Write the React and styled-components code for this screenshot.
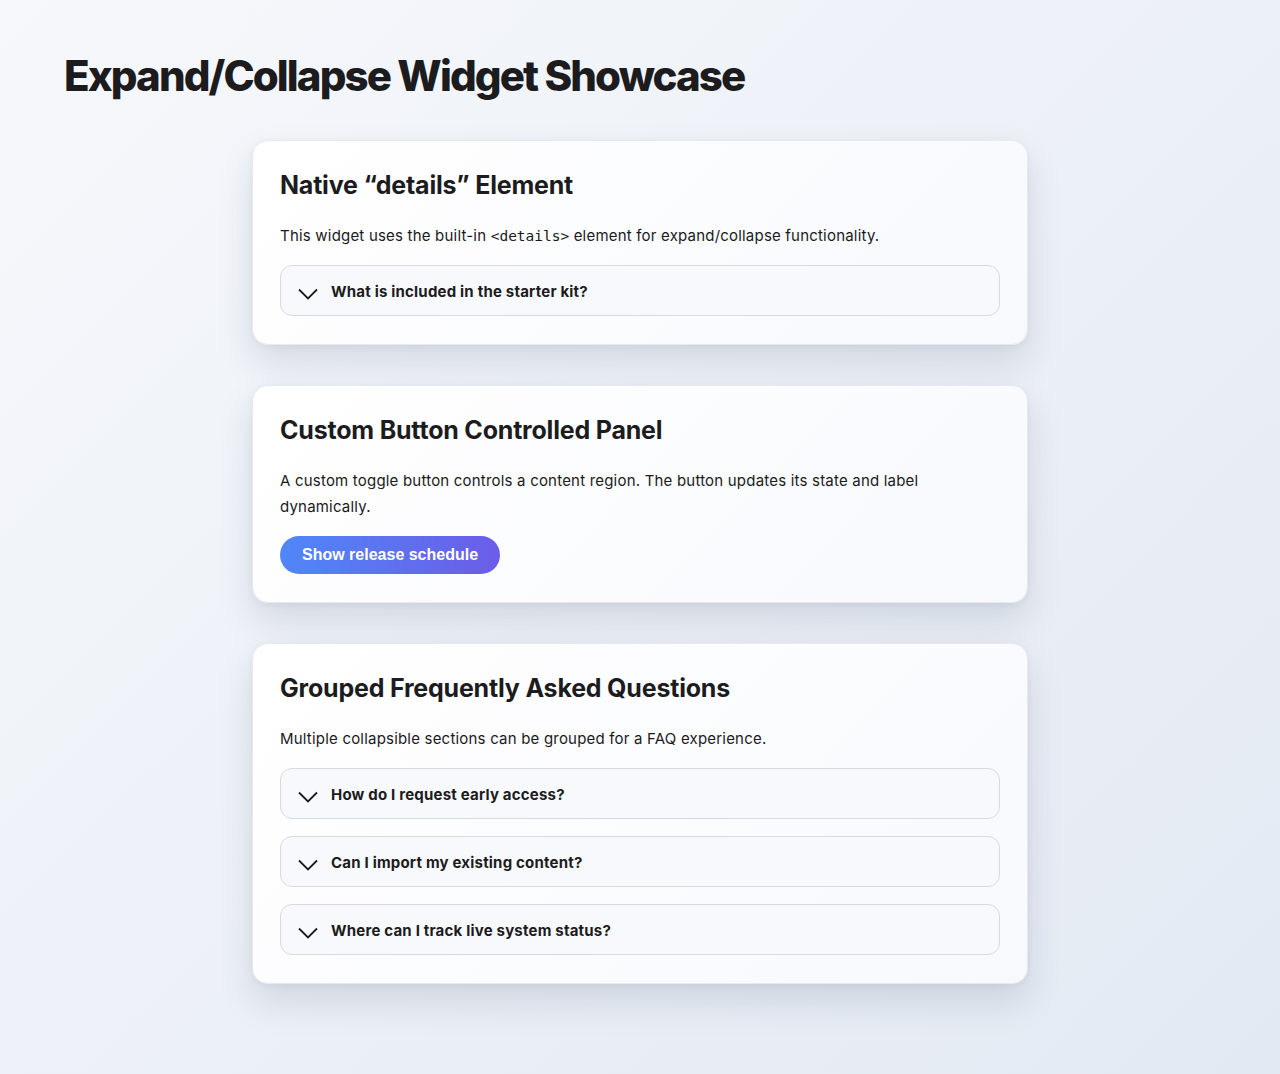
import React, { useState } from "react";
import styled, { createGlobalStyle } from "styled-components";

const Global = createGlobalStyle`
  * { box-sizing: border-box; }
  html, body { margin: 0; padding: 0; }
  body {
    min-height: 1074px;
    font-family: Inter, "Noto Sans", sans-serif;
    color: #1c1c1e;
    background: linear-gradient(135deg, #f6f8fb 0%, #e3e9f3 100%);
  }
`;

const Page = styled.main`
  padding: 50px 64px 90px;
`;

const Title = styled.h1`
  margin: 0 0 38px;
  font-size: 42px;
  line-height: 52px;
  font-weight: 800;
  letter-spacing: -1.9px;
  color: #1c1c1e;
`;

const Stack = styled.div`
  max-width: 776px;
  margin: 0 auto;
  display: flex;
  flex-direction: column;
  gap: 40px;
`;

const Card = styled.section`
  background: linear-gradient(135deg, #ffffff 0%, #f8f9fd 100%);
  border: 1px solid #e6e9f0;
  border-radius: 16px;
  padding: 27px 27px 28px;
  box-shadow: 0 18px 36px rgba(30, 45, 80, 0.13), 0 2px 6px rgba(30, 45, 80, 0.05);
`;

const CardTitle = styled.h2`
  margin: 0 0 21px;
  font-size: 25px;
  line-height: 34px;
  font-weight: 700;
  letter-spacing: -0.2px;
  color: #1c1c1e;
`;

const Text = styled.p`
  margin: 0 0 16px;
  font-size: 15px;
  line-height: 26px;
  letter-spacing: 0.2px;
  color: #1a1a1c;
`;

const Code = styled.code`
  font-family: "DejaVu Sans Mono", "Liberation Mono", monospace;
  font-size: 14.5px;
  letter-spacing: 0;
`;

const Group = styled.div`
  display: flex;
  flex-direction: column;
  gap: 17px;
`;

const Details = styled.details`
  border: 1px solid #d6dae4;
  border-radius: 12px;
  background: #f8f9fc;
`;

const Summary = styled.summary`
  list-style: none;
  display: flex;
  align-items: center;
  gap: 13px;
  height: 49px;
  padding: 2px 17px 0;
  font-size: 15px;
  font-weight: 700;
  letter-spacing: 0.2px;
  color: #1c1c1e;
  cursor: pointer;
  &::-webkit-details-marker { display: none; }
`;

const Chevron = styled.svg`
  width: 20px;
  height: 12px;
  margin-top: 5px;
  flex: none;
  transition: transform 0.2s;
  details[open] & { transform: rotate(180deg); }
`;

const Answer = styled.div`
  padding: 0 18px 16px 50px;
  font-size: 15px;
  line-height: 24px;
`;

const ToggleButton = styled.button`
  border: none;
  border-radius: 999px;
  height: 38px;
  padding: 0 22px;
  font-family: "Liberation Sans", Arial, sans-serif;
  font-size: 16px;
  font-weight: 700;
  color: #ffffff;
  background: linear-gradient(100deg, #4f88f8 0%, #6c5ce7 100%);
  cursor: pointer;
`;

const Panel = styled.div`
  margin-top: 16px;
  font-size: 15px;
  line-height: 24px;
`;

function Item({ q, a }) {
  return (
    <Details>
      <Summary>
        <Chevron viewBox="0 0 20 12" fill="none">
          <polyline points="1,1.5 10,10.5 19,1.5" stroke="#1c1c1e" strokeWidth="1.8" />
        </Chevron>
        {q}
      </Summary>
      <Answer>{a}</Answer>
    </Details>
  );
}

export default function App() {
  const [open, setOpen] = useState(false);
  return (
    <>
      <Global />
      <Page>
        <Title>Expand/Collapse Widget Showcase</Title>
        <Stack>
          <Card>
            <CardTitle>Native “details” Element</CardTitle>
            <Text>
              This widget uses the built-in <Code>&lt;details&gt;</Code> element for expand/collapse functionality.
            </Text>
            <Item q="What is included in the starter kit?" a="Templates, components and documentation to get started quickly." />
          </Card>
          <Card>
            <CardTitle>Custom Button Controlled Panel</CardTitle>
            <Text>
              A custom toggle button controls a content region. The button updates its state and label dynamically.
            </Text>
            <ToggleButton aria-expanded={open} onClick={() => setOpen(!open)}>
              {open ? "Hide release schedule" : "Show release schedule"}
            </ToggleButton>
            {open && <Panel>Releases ship every second Tuesday.</Panel>}
          </Card>
          <Card>
            <CardTitle>Grouped Frequently Asked Questions</CardTitle>
            <Text>Multiple collapsible sections can be grouped for a FAQ experience.</Text>
            <Group>
              <Item q="How do I request early access?" a="Join the waitlist from your account settings." />
              <Item q="Can I import my existing content?" a="Yes, imports are supported from common formats." />
              <Item q="Where can I track live system status?" a="Visit the status page for live updates." />
            </Group>
          </Card>
        </Stack>
      </Page>
    </>
  );
}
